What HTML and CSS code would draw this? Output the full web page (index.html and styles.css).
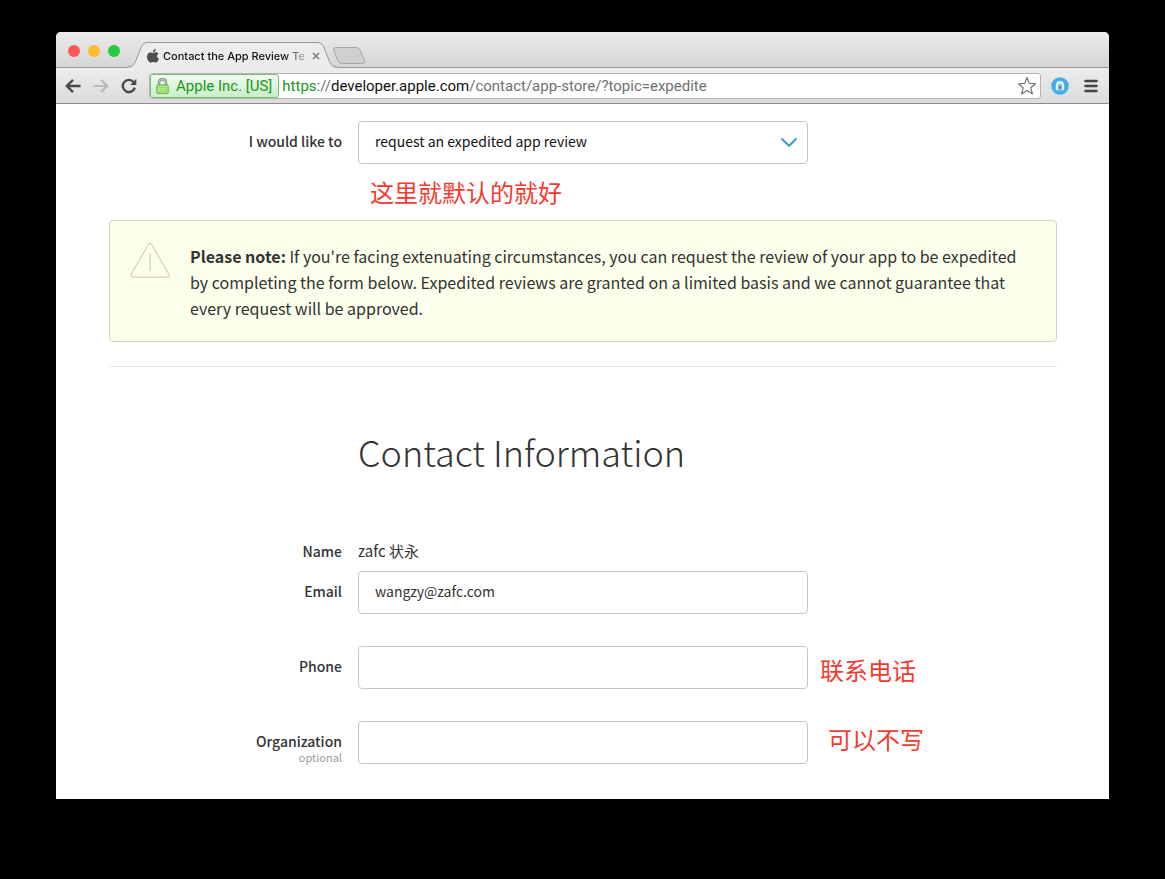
FILE: index.html
```html
<!DOCTYPE html>
<html lang="en">
<head>
<meta charset="utf-8">
<meta name="viewport" content="width=device-width, initial-scale=1">
<title>Contact the App Review Team</title>
<link rel="stylesheet" href="styles.css">
</head>
<body>
<div class="window">
  <header class="tabstrip">
    <div class="lights">
      <button class="light light-close" aria-label="Close window"></button>
      <button class="light light-min" aria-label="Minimize window"></button>
      <button class="light light-max" aria-label="Zoom window"></button>
    </div>
    <div class="tab">
      <svg class="tab-shape" viewBox="0 0 209 26" aria-hidden="true">
        <path d="M0 25.500C5 25.500 6 23.500 7.500 20L13.500 4.500Q15 .5 19 .5H190Q194 .5 195.500 4.500L201.500 20C203 23.500 204 25.500 209 25.500V26H0Z" fill="#ececec"/>
        <path d="M0 24.500C5 24.500 6 23 7.500 19.500L13.500 4.500Q15 .5 19 .5H190Q194 .5 195.500 4.500L201.500 19.500C203 23 204 24.500 209 24.500" fill="none" stroke="#9a9a9a"/>
      </svg>
      <div class="tab-content">
        <svg class="apple" viewBox="0 0 12 14" aria-hidden="true"><path d="M8.700 0C8.800 1.700 7.500 3.100 5.900 3.200C5.800 1.700 7.100.2 8.700 0ZM6.100 4C6.700 4 7.500 3.300 8.800 3.300C9.900 3.300 10.900 3.900 11.500 4.700C9.500 5.900 9.800 8.900 12 9.800C11.500 11.400 10.100 13.700 8.700 13.700C7.800 13.700 7.400 13.100 6.300 13.100C5.200 13.100 4.700 13.700 3.900 13.700C2.200 13.700 0 10.600 0 7.700C0 4.900 1.700 3.400 3.500 3.400C4.700 3.400 5.600 4 6.100 4Z" fill="#505050"/></svg>
        <span class="tab-title">Contact the App Review Te</span>
        <button class="tab-close" aria-label="Close tab"><svg viewBox="0 0 8 8"><path d="M1 1L7 7M7 1L1 7" stroke="#7c7c7c" stroke-width="1.500"/></svg></button>
      </div>
    </div>
    <button class="new-tab" aria-label="New tab"><svg viewBox="0 0 34 17"><path d="M4 .5H24Q27 .5 28 3L32.500 14Q33 16.500 30 16.500H10Q7 16.500 6 14L1.500 3Q1 .5 4 .5Z" fill="#d0d0d0" stroke="#a5a5a5"/></svg></button>
  </header>

  <nav class="toolbar" aria-label="Browser">
    <button class="tool" aria-label="Back"><svg viewBox="0 0 16 16"><path d="M15.500 8H2M8 1.800L1.800 8L8 14.200" fill="none" stroke="#4a4a4a" stroke-width="2.400"/></svg></button>
    <button class="tool" aria-label="Forward"><svg viewBox="0 0 16 16"><path d="M.5 8H14M8 1.800L14.200 8L8 14.200" fill="none" stroke="#b9b9b9" stroke-width="2.200"/></svg></button>
    <button class="tool" aria-label="Reload"><svg viewBox="0 0 16 16"><path d="M13.800 9.600A6.100 6.100 0 1 1 12.600 4" fill="none" stroke="#4a4a4a" stroke-width="2.400"/><path d="M15.300 .8V7H9.200Z" fill="#4a4a4a"/></svg></button>
    <div class="omnibox">
      <span class="badge">
        <svg class="lock" viewBox="0 0 13 16" aria-hidden="true"><path d="M3 8V4.500Q3 1.200 6.500 1.200T10 4.500V8" fill="none" stroke="#7d8a78" stroke-width="2.400"/><path d="M3 8V4.500Q3 1.200 6.500 1.200T10 4.500V8" fill="none" stroke="#dde5da" stroke-width=".8"/><rect x=".8" y="7" width="11.400" height="8.400" rx=".8" fill="#b4ea8e" stroke="#6aa653"/><path d="M2 9.500H11M2 11.500H11M2 13.500H11" stroke="#86d35c" stroke-width=".7"/></svg>
        Apple Inc. [US]
      </span>
      <span class="url"><span class="scheme">https</span>://<span class="host">developer.apple.com</span>/contact/app-store/?topic=expedite</span>
      <button class="star" aria-label="Bookmark this page"><svg viewBox="0 0 20 20"><path d="M10 1.500L12.300 7.400L18.700 7.800L13.800 11.800L15.400 18L10 14.600L4.600 18L6.200 11.800L1.300 7.800L7.700 7.400Z" fill="#fff" stroke="#777" stroke-width="1.200" stroke-linejoin="round"/></svg></button>
    </div>
    <button class="ext" aria-label="Extension"><svg viewBox="0 0 18 18"><circle cx="9" cy="9" r="8.800" fill="#46aee6"/><path d="M4.800 12V8.500Q4.800 4 9 4T13.200 8.500V12Q13.200 13.200 12 13.200H6Q4.800 13.200 4.800 12Z" fill="#e6f4fb"/><path d="M7 13.200V8.500Q7 6.500 9 6.500T11 8.500V13.200Z" fill="#7cc5ec"/><circle cx="9" cy="10.500" r="1.400" fill="#5f8797"/></svg></button>
    <button class="menu" aria-label="Menu"><svg viewBox="0 0 14 14"><path d="M1.500 2H12.500M1.500 7H12.500M1.500 12H12.500" stroke="#454545" stroke-width="2.600" stroke-linecap="round"/></svg></button>
  </nav>

  <main class="page">
    <form class="form">
      <div class="row">
        <label class="label" for="topic">I would like to</label>
        <div class="select-box">
          <select class="field" id="topic"><option>request an expedited app review</option></select>
          <svg class="chevron" viewBox="0 0 18 11" aria-hidden="true"><path d="M1.500 1.500L9 8.800L16.500 1.500" fill="none" stroke="#3d9cc4" stroke-width="2"/></svg>
        </div>
        <p class="remark remark-below">这里就默认的就好</p>
      </div>

      <aside class="notice">
        <svg class="warning" viewBox="0 0 40 36" aria-hidden="true"><path d="M18.800 1.700Q20 0 21.200 1.700L39 32.500Q39.800 35.200 37.500 35.200H2.500Q.2 35.200 1 32.500Z" fill="none" stroke="#dccfaa" stroke-width="1.200"/><path d="M20 11V29" stroke="#dccfaa" stroke-width="1.300"/></svg>
        <p class="notice-text"><strong>Please note:</strong> If you're facing extenuating circumstances, you can request the review of your app to be expedited by completing the form below. Expedited reviews are granted on a limited basis and we cannot guarantee that every request will be approved.</p>
      </aside>

      <section class="contact">
        <div class="row"><h1 class="heading">Contact Information</h1></div>
        <div class="row row-name"><span class="label">Name</span><span class="value">zafc 状永</span></div>
        <div class="row row-field">
          <label class="label" for="email">Email</label>
          <input class="field" id="email" type="email" value="wangzy@zafc.com">
        </div>
        <div class="row row-field">
          <label class="label" for="phone">Phone</label>
          <input class="field" id="phone" type="tel">
          <span class="remark">联系电话</span>
        </div>
        <div class="row row-field">
          <label class="label" for="org">Organization<small class="optional">optional</small></label>
          <input class="field" id="org" type="text">
          <span class="remark remark-org">可以不写</span>
        </div>
      </section>
    </form>
  </main>
</div>
</body>
</html>
```
FILE: styles.css
```css
* { box-sizing: border-box; }

body {
  margin: 0;
  min-height: 100vh;
  padding: 32px 56px 80px;
  display: flex;
  flex-direction: column;
  background: #000;
  color: #333;
  font-family: "Noto Sans CJK SC", "Noto Sans", sans-serif;
  font-size: 14px;
}

button { border: 0; padding: 0; background: none; }
svg { display: block; width: 100%; height: 100%; }
p, h1 { margin: 0; }

.window {
  flex: 1;
  display: flex;
  flex-direction: column;
  background: #fff;
  border-radius: 5px 5px 0 0;
  overflow: hidden;
}

.tabstrip {
  display: flex;
  align-items: flex-end;
  height: 36px;
  padding-left: 12px;
  background: linear-gradient(#ebebeb, #d5d5d5);
  border-bottom: 1px solid #9a9a9a;
}

.lights { display: flex; gap: 8px; padding-bottom: 10px; }
.light { width: 12px; height: 12px; border-radius: 50%; }
.light-close { background: #fc5b57; }
.light-min { background: #fdbc2e; }
.light-max { background: #28c840; }

.tab { display: grid; width: 209px; height: 26px; margin: 0 0 -1px 8px; z-index: 1; }
.tab-shape, .tab-content { grid-area: 1 / 1; }
.tab-content { display: flex; align-items: center; padding: 2px 14px 0 19px; }
.apple { width: 12px; height: 14px; flex: none; }
.tab-title {
  width: 142px;
  margin-left: 4px;
  white-space: nowrap;
  font: 500 11px/18px Inter, sans-serif;
  color: #111;
  mask-image: linear-gradient(90deg, #000 122px, transparent 148px);
}
.tab-close { flex: none; width: 8px; height: 8px; margin-left: 7px; }
.new-tab { width: 34px; height: 17px; margin: 0 0 3px -5px; }

.toolbar {
  display: flex;
  align-items: center;
  height: 36px;
  padding: 0 11px 0 9px;
  background: linear-gradient(#ececec, #dcdcdc);
  border-bottom: 1px solid #8c8c8c;
}
.tool { flex: none; width: 16px; height: 16px; margin-right: 12px; }
.omnibox {
  flex: 1;
  display: flex;
  align-items: center;
  min-width: 0;
  height: 26px;
  background: #fff;
  border: 1px solid #b4b4b4;
  border-radius: 3px;
  font: 15px/24px Roboto, sans-serif;
}
.badge {
  flex: none;
  display: flex;
  gap: 7px;
  align-items: center;
  height: 24px;
  padding: 0 6px 0 5px;
  background: linear-gradient(#f0fbf0, #c8efc9);
  border: 1px solid #7cbf7d;
  border-radius: 3px;
  color: #1c9420;
}
.lock { width: 13px; height: 16px; }
.url { flex: 1; min-width: 0; margin-left: 3px; overflow: hidden; white-space: nowrap; color: #707070; }
.scheme { color: #1c9420; }
.host { color: #111; }
.star { flex: none; width: 20px; height: 20px; margin-right: 3px; }
.ext { flex: none; width: 18px; height: 18px; margin-left: 10px; }
.menu { flex: none; width: 14px; height: 14px; margin-left: 15px; }

.page { padding: 17px 52px 34px 53px; }

.row {
  display: grid;
  grid-template-columns: minmax(96px, 233px) minmax(200px, 450px) 1fr;
  column-gap: 16px;
}
.label { font-weight: 500; line-height: 40px; text-align: right; }
.optional {
  display: block;
  margin-top: -11px;
  font-size: 11px;
  font-weight: 400;
  line-height: 14px;
  color: #999;
}
.field {
  width: 100%;
  height: 43px;
  padding: 0 16px 3px;
  appearance: none;
  background: #fff;
  border: 1px solid #c6c6c6;
  border-radius: 4px;
  color: #333;
  font: inherit;
}
.select-box { display: grid; align-items: center; }
.select-box .field { grid-area: 1 / 1; color: #111; }
.chevron { grid-area: 1 / 1; justify-self: end; width: 18px; height: 11px; margin-right: 10px; pointer-events: none; }

.remark { margin-left: -4px; color: #f43b30; font-size: 24px; line-height: 48px; }
.remark-below { grid-column: 2; margin: 0; padding: 12px; line-height: 32px; }
.remark-org { margin-left: 4px; line-height: 36px; }

.notice {
  display: flex;
  gap: 20px;
  padding: 21px 28px 20px 20px;
  background: #fcffeb;
  border: 1px solid #d2d6c0;
  border-radius: 4px;
}
.warning { flex: none; width: 40px; height: 36px; }
.notice-text { padding-top: 1px; font-size: 16px; line-height: 26px; }

.contact { margin-top: 24px; padding-top: 56px; border-top: 1px solid #e6e6e6; }
.heading { grid-column: 2; font-size: 36px; font-weight: 300; line-height: 56px; }
.row-name { margin-top: 52px; }
.value { font-size: 15px; line-height: 40px; }
.row-field + .row-field { margin-top: 32px; }
.row-field { height: 43px; }
```
